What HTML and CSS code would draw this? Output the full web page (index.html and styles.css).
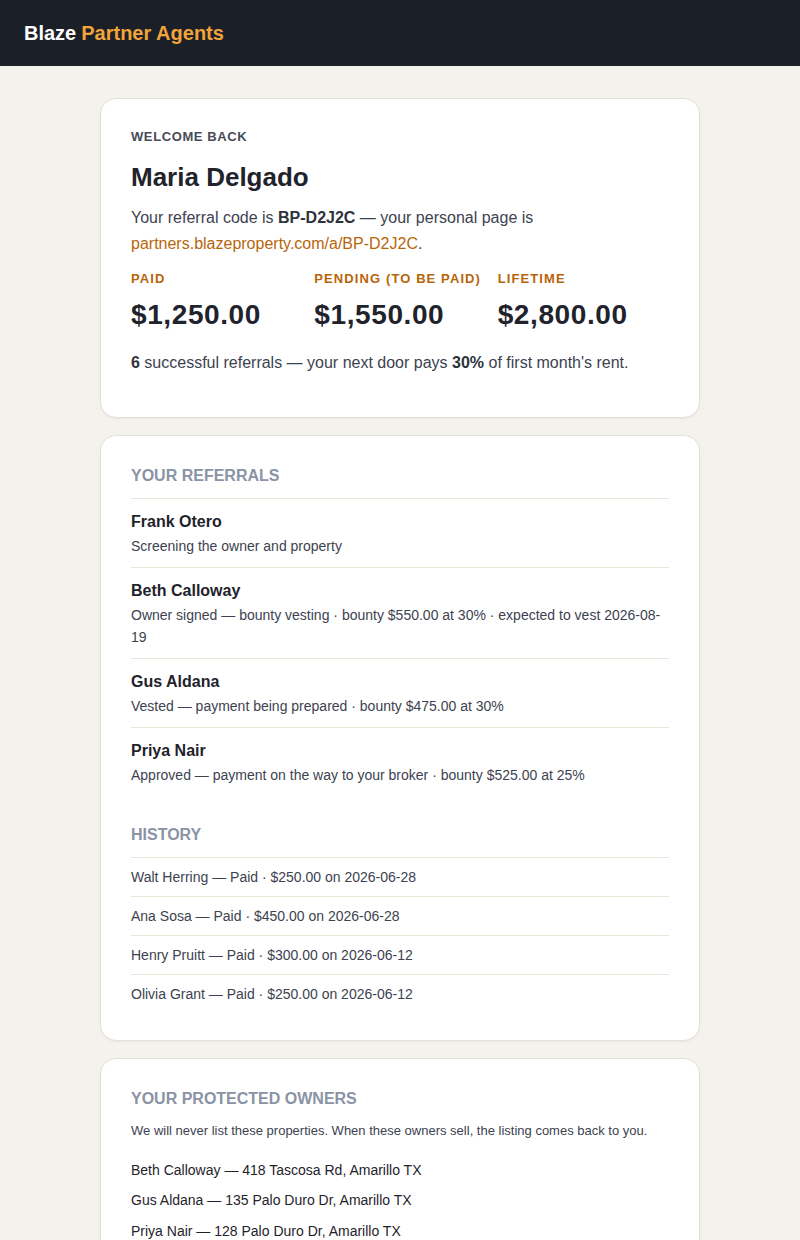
FILE: index.html
```html
<!DOCTYPE html>
<html>
<head>
<meta charset="utf-8">
<link rel="stylesheet" href="styles.css">
</head>
<body>
<header class="topbar"><span class="brand">Blaze</span> <span class="brand-accent">Partner Agents</span></header>
<main class="wrap">
  <section class="card card-welcome">
    <div class="eyebrow">Welcome back</div>
    <h1 class="name">Maria Delgado</h1>
    <p class="intro">Your referral code is <b>BP-D2J2C</b> — your personal page is <a class="link">partners.blazeproperty.com/a/BP-D2J2C</a>.</p>
    <div class="stats">
      <div class="stat"><div class="stat-label">Paid</div><div class="stat-value">$1,250.00</div></div>
      <div class="stat"><div class="stat-label">Pending (to be paid)</div><div class="stat-value">$1,550.00</div></div>
      <div class="stat"><div class="stat-label">Lifetime</div><div class="stat-value">$2,800.00</div></div>
    </div>
    <p class="summary"><b>6</b> successful referrals — your next door pays <b>30%</b> of first month's rent.</p>
  </section>

  <section class="card card-referrals">
    <h2 class="section-title">Your referrals</h2>
    <ul class="refs">
      <li class="ref"><div class="ref-name">Frank Otero</div><div class="ref-sub">Screening the owner and property</div></li>
      <li class="ref"><div class="ref-name">Beth Calloway</div><div class="ref-sub">Owner signed — bounty vesting · bounty $550.00 at 30% · expected to vest 2026-08-19</div></li>
      <li class="ref"><div class="ref-name">Gus Aldana</div><div class="ref-sub">Vested — payment being prepared · bounty $475.00 at 30%</div></li>
      <li class="ref"><div class="ref-name">Priya Nair</div><div class="ref-sub">Approved — payment on the way to your broker · bounty $525.00 at 25%</div></li>
    </ul>
    <h2 class="section-title history-title">History</h2>
    <ul class="history">
      <li>Walt Herring — Paid · $250.00 on 2026-06-28</li>
      <li>Ana Sosa — Paid · $450.00 on 2026-06-28</li>
      <li>Henry Pruitt — Paid · $300.00 on 2026-06-12</li>
      <li>Olivia Grant — Paid · $250.00 on 2026-06-12</li>
    </ul>
  </section>

  <section class="card card-owners">
    <h2 class="section-title">Your protected owners</h2>
    <p class="note">We will never list these properties. When these owners sell, the listing comes back to you.</p>
    <ul class="owners">
      <li>Beth Calloway — 418 Tascosa Rd, Amarillo TX</li>
      <li>Gus Aldana — 135 Palo Duro Dr, Amarillo TX</li>
      <li>Priya Nair — 128 Palo Duro Dr, Amarillo TX</li>
    </ul>
  </section>
</main>
</body>
</html>
```
FILE: styles.css
```css
* { box-sizing: border-box; }
body {
  margin: 0;
  background: #f4f2ec;
  font-family: "Liberation Sans", Arial, sans-serif;
  color: #3d4250;
}
.topbar {
  background: #1b1f27;
  height: 66px;
  display: flex;
  align-items: center;
  gap: 5px;
  padding: 0 24px;
  font-size: 20px;
  line-height: 24px;
  font-weight: bold;
}
.brand { color: #ffffff; }
.brand-accent { color: #f0a43a; }
.wrap {
  width: 600px;
  margin: 32px auto 24px;
  display: flex;
  flex-direction: column;
  gap: 17px;
}
.card {
  background: #fff;
  border: 1px solid #e5e0d4;
  border-radius: 16px;
  padding: 30px 30px 27px;
  box-shadow: 0 1px 2px rgba(60, 50, 30, 0.05);
}
.card-welcome { padding-bottom: 31px; }
.eyebrow {
  font-size: 13px;
  line-height: 16px;
  font-weight: bold;
  letter-spacing: 0.6px;
  text-transform: uppercase;
  color: #474c57;
}
.name {
  margin: 16px 0 12px;
  font-size: 26px;
  line-height: 32px;
  font-weight: bold;
  color: #1f232b;
}
.intro { margin: 0; font-size: 16px; line-height: 26px; }
.intro b { color: #2e323b; }
.link { color: #b8650a; text-decoration: none; }
.stats {
  display: grid;
  grid-template-columns: repeat(3, 1fr);
  gap: 12px;
  margin-top: 14px;
}
.stat-label {
  font-size: 13px;
  line-height: 16px;
  font-weight: bold;
  letter-spacing: 1.1px;
  text-transform: uppercase;
  color: #b8650a;
}
.stat-value {
  margin-top: 11px;
  font-size: 28px;
  line-height: 34px;
  font-weight: bold;
  letter-spacing: 0.6px;
  color: #1f232b;
}
.summary { margin: 18px 0 10px; font-size: 16px; line-height: 26px; }
.summary b { color: #2e323b; }
.section-title {
  margin: 0 0 12px;
  font-size: 16px;
  line-height: 20px;
  font-weight: bold;
  text-transform: uppercase;
  color: #8a93a5;
}
.refs, .history, .owners { list-style: none; margin: 0; padding: 0; }
.ref { border-top: 1px solid #ece6da; padding: 12px 0 10.5px; }
.ref-name { font-size: 16px; line-height: 22px; font-weight: bold; color: #1f232b; }
.ref-sub { font-size: 14px; line-height: 22px; margin-top: 1.5px; }
.history-title { margin-top: 29px; }
.history li {
  border-top: 1px solid #ece6da;
  font-size: 14px;
  line-height: 20px;
  padding: 9px 0 9px;
}
.note { margin: 12px 0 18.5px; font-size: 13px; line-height: 20px; }
.owners li { font-size: 14px; line-height: 20px; color: #1f232b; margin-bottom: 10.5px; }
```
